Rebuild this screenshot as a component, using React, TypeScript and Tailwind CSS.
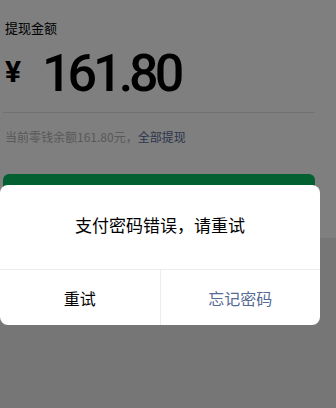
import React from "react";

const CJK = "font-['Noto_Sans_CJK_SC',sans-serif]";

const WithdrawPage: React.FC = () => {
  return (
    <div className="bg-white h-[238px] pl-[5px] pr-[21px] pt-[19px]">
      <p className={`${CJK} text-[13px] leading-[18px] text-black`}>提现金额</p>
      <div className="flex items-center mt-[12px] h-[50px] font-['Roboto',sans-serif] text-black">
        <span className="text-[30px] font-bold w-[37px] leading-none mb-[4px]">¥</span>
        <span className="text-[52px] font-medium leading-none tracking-[-4px]">161.80</span>
      </div>
      <div className="mt-[13px] ml-[-2px] h-px bg-[#e5e5e5]" />
      <p className={`${CJK} mt-[15px] text-[12px] leading-[18px] text-[#b2b2b2]`}>
        当前零钱余额161.80元，<span className="text-[#576b95]">全部提现</span>
      </p>
      <div className="mt-[28px] ml-[-2px] h-[48px] rounded-md bg-[#07c160]" />
    </div>
  );
};

const Dialog: React.FC = () => {
  return (
    <div className="absolute left-0 top-[185px] w-[320px] rounded-lg bg-white overflow-hidden">
      <div className={`${CJK} h-[84px] flex items-center justify-center text-[17px] text-black pb-[4px]`}>
        支付密码错误，请重试
      </div>
      <div className="flex h-[56px] border-t border-[#ededed]">
        <button className={`${CJK} flex-1 text-[16px] text-black`}>重试</button>
        <div className="w-px bg-[#ededed]" />
        <button className={`${CJK} flex-1 text-[16px] text-[#576b95]`}>忘记密码</button>
      </div>
    </div>
  );
};

export default function App() {
  return (
    <div className="relative w-[336px] h-[408px] overflow-hidden bg-[#ededed]">
      <WithdrawPage />
      <div className="absolute inset-0 bg-black/50" />
      <Dialog />
    </div>
  );
}
